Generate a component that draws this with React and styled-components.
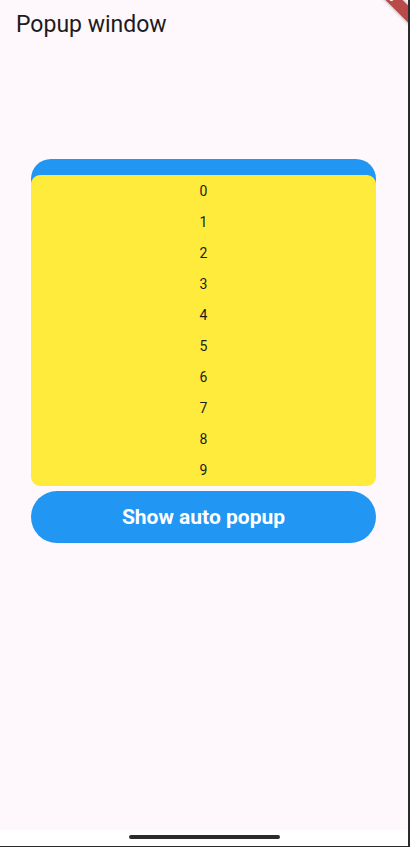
import React from "react";
import styled, { createGlobalStyle } from "styled-components";

const Global = createGlobalStyle`
  html, body { margin: 0; padding: 0; }
  body { font-family: Roboto, "Noto Sans", sans-serif; }
`;

const Screen = styled.div`
  position: relative;
  width: 410px;
  height: 847px;
  box-sizing: border-box;
  border-right: 2px solid #2b2b2b;
  border-bottom: 1px solid #2b2b2b;
  background: #fef7fb;
  overflow: hidden;
  display: flex;
  flex-direction: column;
`;

const AppBar = styled.header`
  padding: 11px 16px 0;
  height: 48px;
  box-sizing: border-box;
`;

const Title = styled.h1`
  margin: 0;
  font-family: Roboto, sans-serif;
  font-weight: 400;
  font-size: 23px;
  line-height: 28px;
  color: #1d1b20;
`;

const Body = styled.main`
  flex: 1;
  display: flex;
  flex-direction: column;
  align-items: flex-start;
  padding: 111px 0 0 31px;
`;

const Anchor = styled.div`
  width: 345px;
  padding-top: 16px;
  border-radius: 20px 20px 0 0;
  background: linear-gradient(#2196f3 0 24px, transparent 24px);
`;

const Popup = styled.div`
  background: #ffeb3b;
  border-radius: 9px;
  padding-top: 1px;
  display: flex;
  flex-direction: column;
`;

const Item = styled.div`
  height: 31px;
  line-height: 31px;
  text-align: center;
  font-family: Roboto, sans-serif;
  font-size: 14px;
  color: #1d1b20;
`;

const Button = styled.button`
  margin-top: 5px;
  width: 345px;
  height: 52px;
  border: none;
  border-radius: 26px;
  background: #2196f3;
  color: #fff;
  font-family: Roboto, sans-serif;
  font-weight: 700;
  font-size: 21px;
  cursor: pointer;
`;

const NavBar = styled.div`
  height: 16px;
  background: #ffffff;
  display: flex;
  justify-content: center;
  padding-top: 5px;
  box-sizing: border-box;
`;

const Handle = styled.div`
  width: 151px;
  height: 4px;
  border-radius: 2px;
  background: #2b2b2b;
`;

const Banner = styled.div`
  position: absolute;
  left: 302px;
  top: -18px;
  width: 160px;
  height: 12px;
  transform: rotate(45deg);
  background: #b94a4a;
  box-shadow: 0 0 4px rgba(0, 0, 0, 0.35);
  color: #fff;
  font-family: Roboto, sans-serif;
  font-weight: 900;
  font-size: 10px;
  line-height: 12px;
  text-align: center;
  letter-spacing: 0.5px;
`;

export default function App() {
  const items = Array.from({ length: 10 }, (_, i) => i);
  return (
    <>
      <Global />
      <Screen>
        <AppBar>
          <Title>Popup window</Title>
        </AppBar>
        <Body>
          <Anchor>
            <Popup>
              {items.map((i) => (
                <Item key={i}>{i}</Item>
              ))}
            </Popup>
          </Anchor>
          <Button>Show auto popup</Button>
        </Body>
        <NavBar>
          <Handle />
        </NavBar>
        <Banner>DEBUG</Banner>
      </Screen>
    </>
  );
}
